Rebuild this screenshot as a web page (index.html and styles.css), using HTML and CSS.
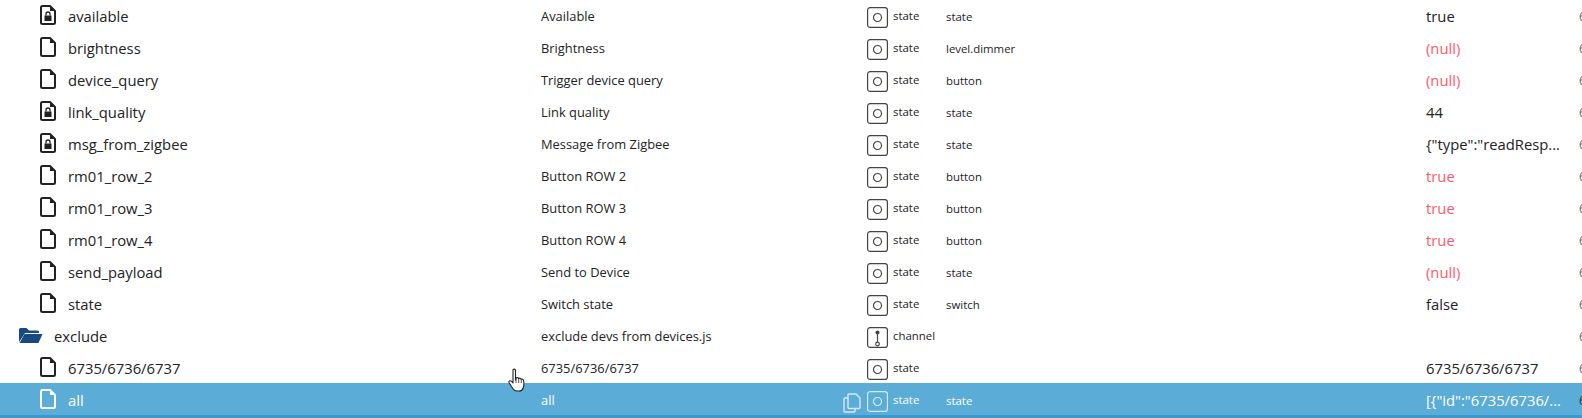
FILE: index.html
```html
<!DOCTYPE html>
<html lang="en">
<head>
<meta charset="utf-8">
<title>Objects</title>
<link rel="stylesheet" href="styles.css">
</head>
<body>
<svg class="defs" width="0" height="0" aria-hidden="true">
  <symbol id="file" viewBox="0 0 16 20"><path d="M2.500 1h7.500l5 5v11.500a1.500 1.500 0 0 1-1.500 1.500h-11a1.500 1.500 0 0 1-1.500-1.500v-15a1.500 1.500 0 0 1 1.500-1.500z" fill="none" stroke="currentColor" stroke-width="2" stroke-linejoin="round"/><path d="M10 1v5h5z" fill="currentColor"/></symbol>
  <symbol id="lock" viewBox="0 0 16 20"><path d="M2.500 1h7.500l5 5v11.500a1.500 1.500 0 0 1-1.500 1.500h-11a1.500 1.500 0 0 1-1.500-1.500v-15a1.500 1.500 0 0 1 1.500-1.500z" fill="none" stroke="currentColor" stroke-width="2" stroke-linejoin="round"/><path d="M10 1v5h5z" fill="currentColor"/><path d="M4.500 10.500h7v5.500h-7z" fill="currentColor"/><path d="M6 10.500v-1.500a2 2 0 0 1 4 0v1.500" fill="none" stroke="currentColor" stroke-width="1.300"/></symbol>
  <symbol id="state" viewBox="0 0 21 21"><rect x=".6" y=".6" width="19.800" height="19.800" rx="2.500" fill="none" stroke="currentColor" stroke-width="1.200"/><circle cx="10.500" cy="10.500" r="4" fill="none" stroke="currentColor" stroke-width="1.200"/></symbol>
  <symbol id="channel" viewBox="0 0 21 21"><rect x=".6" y=".6" width="19.800" height="19.800" rx="2.500" fill="none" stroke="currentColor" stroke-width="1.200"/><path d="M10.500 6v9" stroke="currentColor" stroke-width="1.200"/><circle cx="10.500" cy="5.500" r="2" fill="currentColor"/><circle cx="10.500" cy="17" r="1.800" fill="none" stroke="currentColor" stroke-width="1.200"/></symbol>
  <symbol id="folder" viewBox="0 0 25 16"><path d="M1 15V2.500A1.500 1.500 0 0 1 2.500 1h6l2.500 2.500h8.500A1.500 1.500 0 0 1 21 5v1H7L2 13.500z" fill="#174a7e"/><path d="M6.500 7H24.500L20.500 16H1.500z" fill="#174a7e"/></symbol>
  <symbol id="copy" viewBox="0 0 18 20"><path d="M6 1h7l4 4v9.500a1 1 0 0 1-1 1h-10a1 1 0 0 1-1-1v-12.500a1 1 0 0 1 1-1z" fill="none" stroke="currentColor" stroke-width="1.400"/><path d="M5 5H2a1 1 0 0 0-1 1v12a1 1 0 0 0 1 1h9a1 1 0 0 0 1-1v-2.500" fill="none" stroke="currentColor" stroke-width="1.400"/></symbol>
</svg>
<div class="table">
  <div class="row"><div class="name"><svg class="ico"><use href="#lock"/></svg><span class="label">available</span></div><div class="desc">Available</div><div class="type"><svg class="tico"><use href="#state"/></svg><span>state</span></div><div class="role">state</div><div class="val">true</div><div class="end">6</div></div>
  <div class="row"><div class="name"><svg class="ico"><use href="#file"/></svg><span class="label">brightness</span></div><div class="desc">Brightness</div><div class="type"><svg class="tico"><use href="#state"/></svg><span>state</span></div><div class="role">level.dimmer</div><div class="val red">(null)</div><div class="end">6</div></div>
  <div class="row"><div class="name"><svg class="ico"><use href="#file"/></svg><span class="label">device_query</span></div><div class="desc">Trigger device query</div><div class="type"><svg class="tico"><use href="#state"/></svg><span>state</span></div><div class="role">button</div><div class="val red">(null)</div><div class="end">6</div></div>
  <div class="row"><div class="name"><svg class="ico"><use href="#lock"/></svg><span class="label">link_quality</span></div><div class="desc">Link quality</div><div class="type"><svg class="tico"><use href="#state"/></svg><span>state</span></div><div class="role">state</div><div class="val">44</div><div class="end">6</div></div>
  <div class="row"><div class="name"><svg class="ico"><use href="#lock"/></svg><span class="label">msg_from_zigbee</span></div><div class="desc">Message from Zigbee</div><div class="type"><svg class="tico"><use href="#state"/></svg><span>state</span></div><div class="role">state</div><div class="val">{"type":"readResp...</div><div class="end">6</div></div>
  <div class="row"><div class="name"><svg class="ico"><use href="#file"/></svg><span class="label">rm01_row_2</span></div><div class="desc">Button ROW 2</div><div class="type"><svg class="tico"><use href="#state"/></svg><span>state</span></div><div class="role">button</div><div class="val red">true</div><div class="end">6</div></div>
  <div class="row"><div class="name"><svg class="ico"><use href="#file"/></svg><span class="label">rm01_row_3</span></div><div class="desc">Button ROW 3</div><div class="type"><svg class="tico"><use href="#state"/></svg><span>state</span></div><div class="role">button</div><div class="val red">true</div><div class="end">6</div></div>
  <div class="row"><div class="name"><svg class="ico"><use href="#file"/></svg><span class="label">rm01_row_4</span></div><div class="desc">Button ROW 4</div><div class="type"><svg class="tico"><use href="#state"/></svg><span>state</span></div><div class="role">button</div><div class="val red">true</div><div class="end">6</div></div>
  <div class="row"><div class="name"><svg class="ico"><use href="#file"/></svg><span class="label">send_payload</span></div><div class="desc">Send to Device</div><div class="type"><svg class="tico"><use href="#state"/></svg><span>state</span></div><div class="role">state</div><div class="val red">(null)</div><div class="end">6</div></div>
  <div class="row"><div class="name"><svg class="ico"><use href="#file"/></svg><span class="label">state</span></div><div class="desc">Switch state</div><div class="type"><svg class="tico"><use href="#state"/></svg><span>state</span></div><div class="role">switch</div><div class="val">false</div><div class="end">6</div></div>
  <div class="row"><div class="name folder-row"><svg class="fico"><use href="#folder"/></svg><span class="label">exclude</span></div><div class="desc">exclude devs from devices.js</div><div class="type"><svg class="tico"><use href="#channel"/></svg><span>channel</span></div><div class="role"></div><div class="val"></div><div class="end">6</div></div>
  <div class="row"><div class="name"><svg class="ico"><use href="#file"/></svg><span class="label">6735/6736/6737</span></div><div class="desc">6735/6736/6737</div><div class="type"><svg class="tico"><use href="#state"/></svg><span>state</span></div><div class="role"></div><div class="val">6735/6736/6737</div><div class="end">6</div></div>
  <div class="row selected"><div class="name"><svg class="ico"><use href="#file"/></svg><span class="label">all</span></div><div class="desc">all</div><div class="type"><svg class="copy"><use href="#copy"/></svg><svg class="tico"><use href="#state"/></svg><span>state</span></div><div class="role">state</div><div class="val">[{"id":"6735/6736/...</div><div class="end">6</div></div>
</div>
<svg class="cursor" width="20" height="28" viewBox="0 0 20 28" aria-hidden="true"><path d="M5 2.500c0-1.800 2.500-1.800 2.500 0V12l.5-2c1-.8 2.200-.5 2.500.5 1-.8 2.300-.3 2.500.8 1-.6 2.300-.1 2.500 1 .6 2 .4 5.500-.3 7.700-.5 1.800-2 3-4.200 3H9c-1.800 0-3-.8-4-2.300L1.200 15c-1-1.600.8-3 2.200-1.800L5 15z" fill="#fff" stroke="#222" stroke-width="1.100" stroke-linejoin="round"/><path d="M8 10v5M10.700 10.500v4.500M13.300 11.500v3.500" stroke="#222" stroke-width=".8"/></svg>
</body>
</html>
```

FILE: styles.css
```css
html, body {
  margin: 0;
  padding: 0;
  width: 1582px;
  height: 418px;
  overflow: hidden;
  background: #fff;
  font-family: "Open Sans", "Noto Sans", sans-serif;
  color: #222;
}
.defs { position: absolute; }
.table {
  display: flex;
  flex-direction: column;
  margin-top: -1px;
}
.row {
  display: grid;
  grid-template-columns: 541px 300px 105px 480px 153px 3px;
  height: 32px;
  align-items: center;
  white-space: nowrap;
}
.name {
  display: flex;
  align-items: center;
  padding-left: 40px;
  font-size: 14.8px;
  gap: 12px;
}
.label { padding-top: 1px; }
.name.folder-row { padding-left: 18px; gap: 11px; }
.ico { width: 16px; height: 20px; color: #222; flex: none; margin-top: -1px; }
.fico { width: 25px; height: 16px; flex: none; }
.desc { font-size: 12.9px; padding-top: 1px; }
.role { font-size: 11.4px; padding-top: 2px; }
.type {
  display: flex;
  align-items: center;
  font-size: 11.4px;
  padding: 4px 0 0 26px;
  gap: 5px;
  position: relative;
}
.tico { width: 21px; height: 21px; color: #444; flex: none; }
.type span { margin-top: -3px; }
.val { font-size: 14.8px; overflow: hidden; padding-top: 1px; }
.red { color: #ff5a66; }
.end { font-size: 12px; color: #666; width: 8px; padding-top: 3px; }
.selected {
  background: #5bacd6;
  color: #fff;
  box-shadow: 0 3px 0 #3a9ad0;
}
.selected .ico, .selected .tico { color: #fff; }
.selected .tico { opacity: .75; }
.selected .end { color: #333; }
.copy {
  position: absolute;
  left: 2px;
  top: 6px;
  width: 18px;
  height: 20px;
  color: #fff;
  opacity: .75;
}
.cursor {
  position: absolute;
  left: 508px;
  top: 368px;
}
```
